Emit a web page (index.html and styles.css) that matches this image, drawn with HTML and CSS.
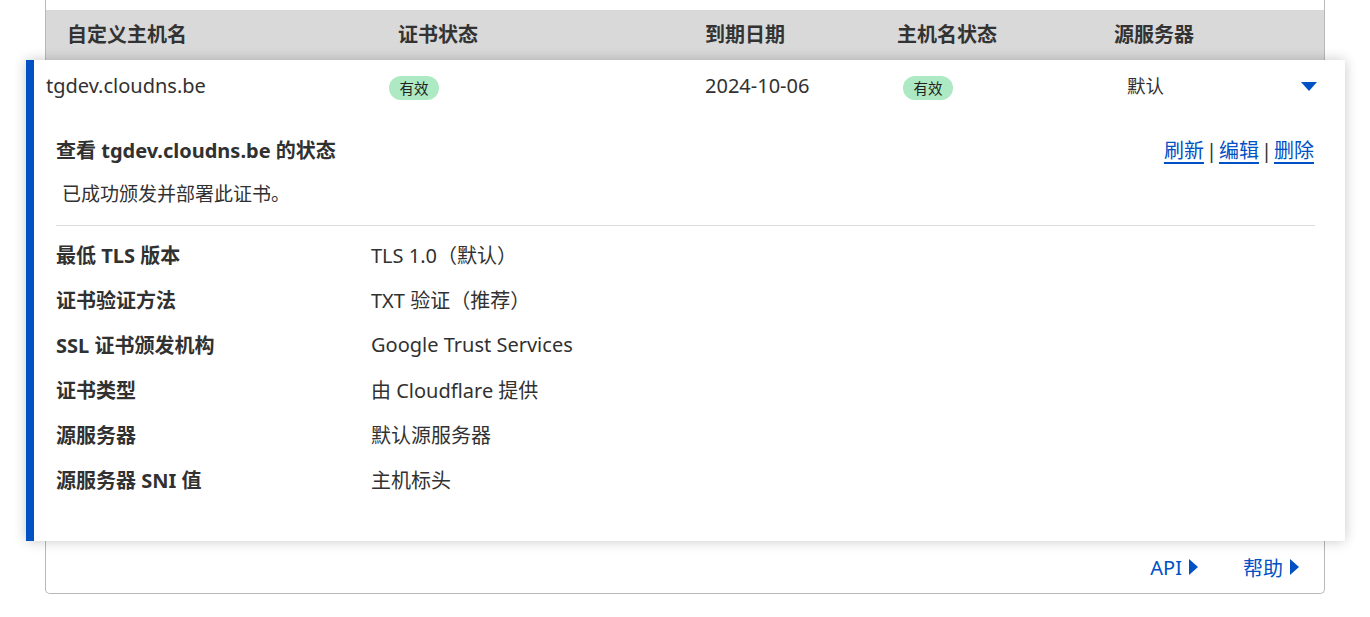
FILE: index.html
```html
<!DOCTYPE html>
<html lang="zh-CN">
<head>
<meta charset="utf-8">
<link rel="stylesheet" href="styles.css">
</head>
<body>
<div class="card">
  <div class="head">
    <div>自定义主机名</div>
    <div>证书状态</div>
    <div>到期日期</div>
    <div>主机名状态</div>
    <div>源服务器</div>
  </div>
  <div class="panel">
    <div class="row">
      <div class="host">tgdev.cloudns.be</div>
      <div><span class="badge">有效</span></div>
      <div class="date">2024-10-06</div>
      <div><span class="badge">有效</span></div>
      <div class="origin">默认</div>
      <div class="caret-cell"><span class="caret"></span></div>
    </div>
    <div class="detail">
      <div class="detail-top">
        <div class="title">查看 tgdev.cloudns.be 的状态</div>
        <div class="actions"><a href="#">刷新</a><span class="sep">|</span><a href="#">编辑</a><span class="sep">|</span><a href="#">删除</a></div>
      </div>
      <div class="msg">已成功颁发并部署此证书。</div>
      <div class="divider"></div>
      <dl class="props">
        <dt>最低 TLS 版本</dt><dd>TLS 1.0（默认）</dd>
        <dt>证书验证方法</dt><dd>TXT 验证（推荐）</dd>
        <dt>SSL 证书颁发机构</dt><dd>Google Trust Services</dd>
        <dt>证书类型</dt><dd>由 Cloudflare 提供</dd>
        <dt>源服务器</dt><dd>默认源服务器</dd>
        <dt>源服务器 SNI 值</dt><dd>主机标头</dd>
      </dl>
    </div>
  </div>
  <div class="foot">
    <a href="#" class="more">API<span class="tri"></span></a>
    <a href="#" class="more">帮助<span class="tri"></span></a>
  </div>
</div>
</body>
</html>
```

FILE: styles.css
```css
* { box-sizing: border-box; }
html, body { margin: 0; padding: 0; background: #fff; }
body {
  font-family: "Noto Sans", "Noto Sans CJK SC", sans-serif;
  color: #313131;
  font-size: 20px;
}
.card {
  margin-left: 45px;
  width: 1280px;
  border: 1px solid #b8b8b8;
  border-top: none;
  border-radius: 0 0 5px 5px;
  padding-top: 10px;
}
.head {
  display: grid;
  grid-template-columns: 331px 307px 192px 217px 1fr;
  padding-left: 21px;
  height: 50px;
  align-items: center;
  background: #d9d9d9;
  font-weight: 700;
  font-size: 20px;
  color: #333;
  line-height: 50px;
  padding-bottom: 3px;
}
.panel {
  margin-left: -20px;
  margin-right: -21px;
  background: #fff;
  border-left: 8px solid #0051c3;
  box-shadow: 0 0 12px rgba(0,0,0,0.22);
  position: relative;
  height: 481px;
}
.row {
  display: grid;
  grid-template-columns: 343px 316px 198px 224px 1fr auto;
  padding-left: 12px;
  padding-right: 28px;
  height: 52px;
  align-items: center;
}
.host { font-size: 20px; line-height: 24px; }
.date { font-size: 20px; line-height: 24px; }
.origin { font-size: 18.5px; line-height: 24px; }
.badge {
  display: inline-block;
  background: #ade9c3;
  color: #222;
  font-size: 14.5px;
  line-height: 24px;
  height: 24px;
  width: 50px;
  text-align: center;
  border-radius: 12px;
  margin-top: 4px;
}
.caret-cell { display: flex; align-items: center; }
.caret {
  width: 0; height: 0;
  border-left: 8px solid transparent;
  border-right: 8px solid transparent;
  border-top: 9px solid #0051c3;
  margin-top: 1px;
}
.detail { padding: 22px 31px 0 22px; }
.detail-top { display: flex; justify-content: space-between; align-items: center; height: 30px; }
.title { font-weight: 700; font-size: 20px; }
.actions { font-size: 20px; color: #333; }
.actions a { color: #0051c3; text-decoration: underline; text-underline-offset: 4px; text-decoration-thickness: 2px; }
.sep { margin: 0 2px; }
.msg { font-size: 19px; margin-top: 16px; padding-left: 6px; line-height: 28px; }
.divider { height: 1px; background: #dcdcdc; margin-top: 17px; margin-right: -1px; }
.props {
  display: grid;
  grid-template-columns: 315px 1fr;
  grid-auto-rows: 45px;
  margin: 6px 0 0 0;
  align-items: center;
}
.props dt { font-weight: 700; font-size: 20px; }
.props dd { margin: 0; font-size: 20px; }
.foot {
  height: 52px;
  display: flex;
  justify-content: flex-end;
  align-items: center;
  gap: 45px;
  padding-right: 25px;
}
.more { color: #0051c3; text-decoration: none; font-size: 20px; display: flex; align-items: center; }
.tri {
  width: 0; height: 0;
  border-top: 8px solid transparent;
  border-bottom: 8px solid transparent;
  border-left: 9px solid #0051c3;
  margin-left: 7px;
}
```
